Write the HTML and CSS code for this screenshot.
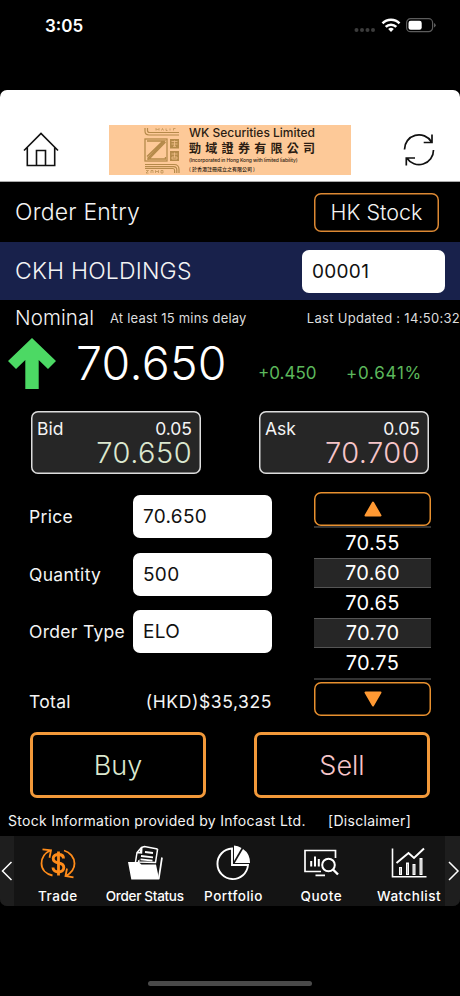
FILE: index.html
```
<!DOCTYPE html>
<html lang="en">
<head>
    <meta charset="UTF-8">
    <meta name="viewport" content="width=device-width, initial-scale=1.0">
    <title>Order Entry</title>
    <link rel="stylesheet" href="styles.css">
</head>
<body>
    <div class="status-bar">
        <span class="clock">3:05</span>
        <svg class="status-icons" width="82" height="18" viewBox="0 0 82 18">
            <g fill="#3c3c3c">
                <circle cx="2.500" cy="13" r="2"/><circle cx="8" cy="13" r="2"/>
                <circle cx="13.500" cy="13" r="2"/><circle cx="19" cy="13" r="2"/>
            </g>
            <g fill="none" stroke="#fff" stroke-width="2.600">
                <path d="M28.500 6.300a12 12 0 0 1 17 0"/>
                <path d="M31.700 9.900a7.500 7.500 0 0 1 10.600 0"/>
            </g>
            <path d="M34.200 12a4.100 4.100 0 0 1 5.600 0L37 15z" fill="#fff"/>
            <rect x="52.600" y="1.700" width="26" height="13" rx="4" fill="none" stroke="#5c5c5c" stroke-width="1.200"/>
            <rect x="54.500" y="3.700" width="13.200" height="9" rx="2.200" fill="#fff"/>
            <path d="M80 6v4.400q1.700-.7 1.700-2.200T80 6z" fill="#5c5c5c"/>
        </svg>
    </div>

    <header class="app-header">
        <svg class="home-icon" width="36" height="36" viewBox="0 0 36 36" fill="none" stroke="#111" stroke-width="1.600">
            <path d="M1 18.500L18 1.500l17 17M4.300 15.500v18h27.400v-18M13.500 33.500v-15h9v15"/>
        </svg>
        <div class="logo">
            <svg class="logo-mark" width="36" height="47" viewBox="0 0 36 47" fill="none" stroke="#b58a4a">
                <path d="M1 1v3q0 4 4 4h30M3.500 1v2.500q0 2 2 2H35" stroke-width="1.200"/>
                <path d="M12 3.500V1.500l1.500 1.500L15 1.500v2M17.500 3.500l1-2 1 2M22 1.500v2h1.500M26 1.500v2M29.500 3.500v-2h2" stroke-width=".7"/>
                <rect x="1" y="12" width="22" height="22" stroke-width="1.300"/>
                <path d="M3 14h17.500L4 31v2M21.500 15L5 32h16.500v-2M19 14L3 29.500" stroke-width="1.400"/>
                <rect x="26" y="12" width="9" height="9.500" fill="#b58a4a" stroke="none"/>
                <path d="M27.500 14.500h6M27.500 17h6M29 19.300h3M30.500 13.500v6" stroke="#f4c08c" stroke-width=".8"/>
                <rect x="26" y="24" width="9" height="10" fill="#b58a4a" stroke="none"/>
                <path d="M27.500 27h6M28 30h5v2h-5zM30.500 25.500v5" stroke="#f4c08c" stroke-width=".8"/>
                <path d="M1 37.500h29q5 0 5 5V46M1 39.700h28.500q3.300 0 3.300 3.300v3M1 41.500h28q1.600 0 1.600 2v2.500" stroke-width="1.200"/>
                <path d="M2 43.500h2.500L2 46h2.500M7 46v-2.500h2V46M11.500 46v-2.500L13 45l1.500-1.500V46M17 43.500h2V46h-2z" stroke-width=".7"/>
            </svg>
            <div class="logo-text">
                <div class="logo-en">WK Securities Limited</div>
                <div class="logo-zh">勁域證券有限公司</div>
                <div class="logo-note">(Incorporated in Hong Kong with limited liability)</div>
                <div class="logo-note-zh">( 於香港註冊成立之有限公司 )</div>
            </div>
        </div>
        <svg class="refresh-icon" width="34" height="34" viewBox="0 0 34 34" fill="none" stroke="#111" stroke-width="1.700">
            <path d="M2.500 16.500A14.500 14.500 0 0 1 29.500 9M30 1.500V9.500h-8.300M31.500 17A14.500 14.500 0 0 1 4.800 25M4.300 32.500V25H13"/>
        </svg>
    </header>

    <div class="title-row">
        <span class="page-title">Order Entry</span>
        <button class="market-btn"><span>HK Stock</span></button>
    </div>

    <div class="symbol-row">
        <span class="symbol-name">CKH HOLDINGS</span>
        <div class="field symbol-field"><span>00001</span></div>
    </div>

    <div class="nominal-row">
        <span class="nominal">Nominal</span>
        <span class="delay">At least 15 mins delay</span>
        <span class="updated">Last Updated : 14:50:32</span>
    </div>

    <div class="price-row">
        <svg class="up-arrow" width="48" height="52" viewBox="0 0 48 52">
            <path d="M24 0l24 23-8 8-9.300-9V51H17.300V22L8 31 0 23z" fill="#4cd964"/>
        </svg>
        <span class="last-price">70.650</span>
        <span class="change">+0.450</span>
        <span class="change-pct">+0.641%</span>
    </div>

    <div class="quotes">
        <div class="quote">
            <div class="quote-top"><span>Bid</span><span>0.05</span></div>
            <div class="quote-price bid">70.650</div>
        </div>
        <div class="quote">
            <div class="quote-top"><span>Ask</span><span>0.05</span></div>
            <div class="quote-price ask">70.700</div>
        </div>
    </div>

    <div class="order">
        <div class="order-form">
            <div class="form-row"><span class="label">Price</span><div class="field"><span>70.650</span></div></div>
            <div class="form-row"><span class="label">Quantity</span><div class="field"><span>500</span></div></div>
            <div class="form-row"><span class="label">Order Type</span><div class="field"><span>ELO</span></div></div>
            <div class="total-row"><span class="label">Total</span><span class="total">(HKD)$35,325</span></div>
        </div>
        <div class="ladder">
            <button class="step-btn">
                <svg width="18" height="16" viewBox="0 0 18 16"><path d="M9 1.500L16.500 14.500h-15z" fill="#ff9933" stroke="#ff9933" stroke-width="2" stroke-linejoin="round"/></svg>
            </button>
            <div class="ladder-list">
                <div class="level"><span>70.55</span></div>
                <div class="level alt"><span>70.60</span></div>
                <div class="level"><span>70.65</span></div>
                <div class="level alt"><span>70.70</span></div>
                <div class="level"><span>70.75</span></div>
            </div>
            <button class="step-btn">
                <svg width="18" height="16" viewBox="0 0 18 16"><path d="M9 14.500L1.500 1.500h15z" fill="#ff9933" stroke="#ff9933" stroke-width="2" stroke-linejoin="round"/></svg>
            </button>
        </div>
    </div>

    <div class="actions">
        <button class="action buy"><span>Buy</span></button>
        <button class="action sell"><span>Sell</span></button>
    </div>

    <div class="info-row">
        <span class="info">Stock Information provided by Infocast Ltd.</span>
        <span class="disclaimer">[Disclaimer]</span>
    </div>

    <nav class="tab-bar">
        <div class="tab-arrow">
            <svg width="14" height="70" viewBox="0 0 14 70" fill="none" stroke="#fff" stroke-width="1.500"><path d="M11.500 26L2.500 35l9 9"/></svg>
        </div>
        <div class="tabs">
            <div class="tab">
                <svg width="36" height="36" viewBox="0 0 36 36" fill="none" stroke="#ff8c1a" stroke-width="1.800">
                    <path d="M12.500 30.500C6 29 1.500 24.500 1.500 18.500c0-5.500 3.500-10.500 8.500-13M2.500 4.300l8.500 1-1.500 7.500M24 5.500c6 1.500 10.500 7 10.500 13 0 5.500-3.500 9.500-8.500 12.500M33.500 32.300l-8-1.300 1.500-7.500"/>
                    <path d="M23.500 13.500c0-2.800-2-4-5-4s-5.300 1.300-5.300 4.100 2.300 3.900 5.300 4.400 5.300 1.600 5.300 4.500-2.300 4.500-5.300 4.500-5.500-1.500-5.500-4.500" stroke-width="2.900"/>
                    <path d="M18.500 6.500v24" stroke-width="2.800"/>
                </svg>
                <span>Trade</span>
            </div>
            <div class="tab tab-status">
                <svg width="36" height="36" viewBox="0 0 36 36" fill="none" stroke="#fff" stroke-width="1.500">
                    <path d="M11.500 17L14 3.500l3-.9 13.500 2-2 13z" fill="#141414"/>
                    <path d="M8.500 17L10 7.500l4.500-5 3-.9 13 2.400M10 7.500l4.500.5.300-5" fill="#141414"/>
                    <path d="M18 7l8 1M14 11l12 1.300M13.500 14.300l12 1.300" stroke-width="1.800"/>
                    <path d="M1 17h10.500l3 2.500H29l3.200 15H4.300z" fill="#fff" stroke="none"/>
                    <path d="M35 12.500L31.700 34" stroke-width="1.700"/>
                </svg>
                <span>Order Status</span>
            </div>
            <div class="tab">
                <svg width="36" height="36" viewBox="0 0 36 36">
                    <path d="M17 3.500A15.300 15.300 0 1 0 33 20H17z" fill="none" stroke="#fff" stroke-width="1.900"/>
                    <path d="M19 .5V16l7.500-13Q23 .7 19 .5z" fill="#fff"/>
                    <path d="M28 4L19.800 18H35Q35 8.500 28 4z" fill="#fff"/>
                </svg>
                <span>Portfolio</span>
            </div>
            <div class="tab">
                <svg width="36" height="36" viewBox="0 0 36 36" fill="none" stroke="#fff" stroke-width="1.700">
                    <path d="M18 26.500H2V5.500h30.500V13M12.500 30.300H22"/>
                    <path d="M8.200 21.500V16M12 21.500v-10M15.800 21.500V14" stroke-width="2"/>
                    <circle cx="25.500" cy="20" r="6.300" stroke-width="2"/>
                    <path d="M30 24.500l5 5" stroke-width="2.400"/>
                </svg>
                <span>Quote</span>
            </div>
            <div class="tab">
                <svg width="36" height="36" viewBox="0 0 36 36" fill="none" stroke="#fff" stroke-width="1.600">
                    <path d="M1.500 3.500v28.200h34"/>
                    <path d="M5.500 18L17.500 8l5.500 5L33 3.500" stroke-width="2"/>
                    <path d="M9.500 30v-8M16.500 30V17.500M23 30V19M30 30V13" stroke-width="3"/>
                    <path d="M9.500 29v-6M16.500 29V19M23 29v-9M30 29V14.500" stroke="#777" stroke-width=".5"/>
                </svg>
                <span>Watchlist</span>
            </div>
        </div>
        <div class="tab-arrow">
            <svg width="15" height="70" viewBox="0 0 15 70" fill="none" stroke="#fff" stroke-width="1.500"><path d="M4 26l9 9-9 9"/></svg>
        </div>
    </nav>

    <div class="home-indicator"></div>
</body>
</html>
```
FILE: styles.css
```
* {
    box-sizing: border-box;
}
body {
    margin: 0;
    width: 460px;
    height: 996px;
    overflow: hidden;
    background-color: #000;
    color: #f4f4f4;
    font-family: Inter, "Liberation Sans", sans-serif;
    white-space: nowrap;
}
button {
    background: none;
    border: none;
    padding: 0;
    color: inherit;
    font-family: inherit;
    display: flex;
    align-items: center;
    justify-content: center;
}
svg {
    display: block;
    flex: none;
}
.status-bar {
    height: 90px;
    display: flex;
    justify-content: space-between;
    padding: 17px 24px 0 45px;
}
.clock {
    font-size: 17px;
    font-weight: 600;
    line-height: 18px;
    color: #fff;
}
.app-header {
    height: 92px;
    background-color: #fff;
    border-radius: 7px 7px 0 0;
    border-bottom: 1px solid #aaa;
    display: flex;
    padding: 35px 24px 0 23px;
}
.home-icon {
    margin-top: 7px;
}
.logo {
    width: 242px;
    height: 50px;
    margin: 0 51px 0 50px;
    background-color: #fdc998;
    display: flex;
    padding: 2px 0 0 35px;
    color: #2b1c12;
}
.logo-text {
    margin-left: 9px;
}
.logo-en {
    font-size: 12px;
    font-weight: 500;
    line-height: 12px;
}
.logo-zh {
    font-family: "Noto Sans CJK TC", sans-serif;
    font-weight: 700;
    font-size: 12px;
    line-height: 17px;
    letter-spacing: 4.300px;
}
.logo-note {
    font-size: 5px;
    font-weight: 500;
    line-height: 9px;
    letter-spacing: -0.130px;
}
.logo-note-zh {
    font-family: "Noto Sans CJK TC", sans-serif;
    font-size: 5px;
    font-weight: 500;
    line-height: 8px;
}
.refresh-icon {
    margin-top: 8px;
}
.title-row {
    height: 60px;
    display: flex;
    align-items: center;
    justify-content: space-between;
    padding: 0 21px 0 15px;
}
.page-title,
.symbol-name {
    font-size: 23px;
    font-weight: 350;
    letter-spacing: 0.200px;
}
.market-btn {
    width: 125px;
    height: 39px;
    box-shadow: inset 0 0 0 1.500px #dc8833;
    border-radius: 7px;
    font-size: 21.500px;
    font-weight: 350;
}
.symbol-row {
    height: 58px;
    background-color: #18214b;
    display: flex;
    align-items: center;
    justify-content: space-between;
    padding: 0 15px;
}
.field {
    width: 139px;
    height: 43px;
    border-radius: 7px;
    background-color: #fff;
    color: #111;
    font-size: 19px;
    line-height: 43px;
    letter-spacing: 0.300px;
    padding-left: 10px;
}
.symbol-field {
    width: 143px;
}
.nominal-row {
    height: 36px;
    display: flex;
    line-height: 36px;
    padding-left: 15px;
}
.nominal {
    width: 95px;
    font-size: 20.500px;
    font-weight: 350;
    letter-spacing: 0.100px;
}
.delay,
.updated {
    font-size: 13px;
    letter-spacing: 0.200px;
    color: #ddd;
}
.delay {
    width: 197px;
}
.updated {
    letter-spacing: 0.300px;
}
.price-row {
    height: 75px;
    display: flex;
    padding: 2px 0 0 8px;
}
.last-price {
    width: 182px;
    margin-left: 20px;
    font-size: 46.500px;
    font-weight: 350;
    line-height: 50px;
    letter-spacing: 0.300px;
    color: #fff;
}
.change,
.change-pct {
    font-size: 17px;
    line-height: 20px;
    margin-top: 25px;
    color: #5cb85c;
}
.change {
    width: 88px;
}
.change-pct {
    letter-spacing: 0.750px;
}
.quotes {
    display: flex;
    justify-content: space-between;
    padding: 0 31px;
}
.quote {
    width: 170px;
    height: 63px;
    background-color: #262626;
    box-shadow: inset 0 0 0 1.500px #ddd;
    border-radius: 7px;
    padding: 7px 9px 0 6px;
}
.quote-top {
    display: flex;
    justify-content: space-between;
    font-size: 17.500px;
    line-height: 21px;
}
.quote-price {
    font-size: 29px;
    font-weight: 350;
    line-height: 28px;
    letter-spacing: 0.450px;
    text-align: right;
}
.bid,
.buy {
    color: #dce8cf;
}
.ask,
.sell {
    color: #f6c5c9;
}
.order {
    display: flex;
    justify-content: space-between;
    padding: 18px 29px 0;
}
.order-form {
    width: 243px;
    padding-top: 3px;
}
.form-row {
    display: flex;
    justify-content: space-between;
    margin-bottom: 15px;
}
.form-row:nth-child(2) {
    margin-bottom: 14px;
}
.label {
    font-size: 17.500px;
    line-height: 43px;
    letter-spacing: 0.300px;
}
.total-row {
    display: flex;
    justify-content: space-between;
    margin-top: 27px;
    height: 32px;
    line-height: 43px;
}
.total {
    font-size: 17.500px;
    letter-spacing: 0.600px;
}
.ladder {
    width: 117px;
}
.step-btn {
    width: 117px;
    height: 34px;
    box-shadow: inset 0 0 0 1.500px #e8902f;
    border-radius: 7px;
}
.ladder-list {
    border-top: 2px solid #333;
    border-bottom: 2px solid #333;
    height: 154px;
    margin-bottom: 2px;
}
.level {
    height: 30px;
    font-size: 20px;
    line-height: 30px;
    letter-spacing: 0.300px;
    text-align: center;
    color: #fff;
}
.alt {
    background-color: #262626;
    border: solid #555;
    border-width: 1px 0;
    line-height: 28px;
}
.actions {
    display: flex;
    justify-content: space-between;
    padding: 16px 30px 0;
}
.action {
    width: 176px;
    height: 66px;
    border: 3px solid #f2993a;
    border-radius: 7px;
    font-size: 27px;
    font-weight: 350;
}
.info-row {
    height: 38px;
    display: flex;
    padding: 13px 0 0 8px;
    font-size: 14px;
    line-height: 20px;
    letter-spacing: 0.300px;
}
.info {
    width: 320px;
}
.tab-bar {
    height: 70px;
    display: flex;
    background-color: #141414;
    border-radius: 0 0 7px 7px;
    overflow: hidden;
}
.tab-arrow {
    background-color: #1e1e1e;
}
.tabs {
    width: 431px;
    display: flex;
}
.tab {
    width: 87.800px;
    flex: none;
    display: flex;
    flex-direction: column;
    align-items: center;
    padding-top: 9px;
    font-size: 13.500px;
    font-weight: 500;
    line-height: 20px;
    letter-spacing: 0.500px;
    color: #fff;
}
.tab span {
    margin-top: 5px;
}
.tab-status {
    letter-spacing: -0.300px;
    padding-right: 2px;
}
.home-indicator {
    width: 164px;
    height: 5px;
    margin: 75px auto 0;
    border-radius: 3px;
    background-color: #4a4a4a;
}
```
